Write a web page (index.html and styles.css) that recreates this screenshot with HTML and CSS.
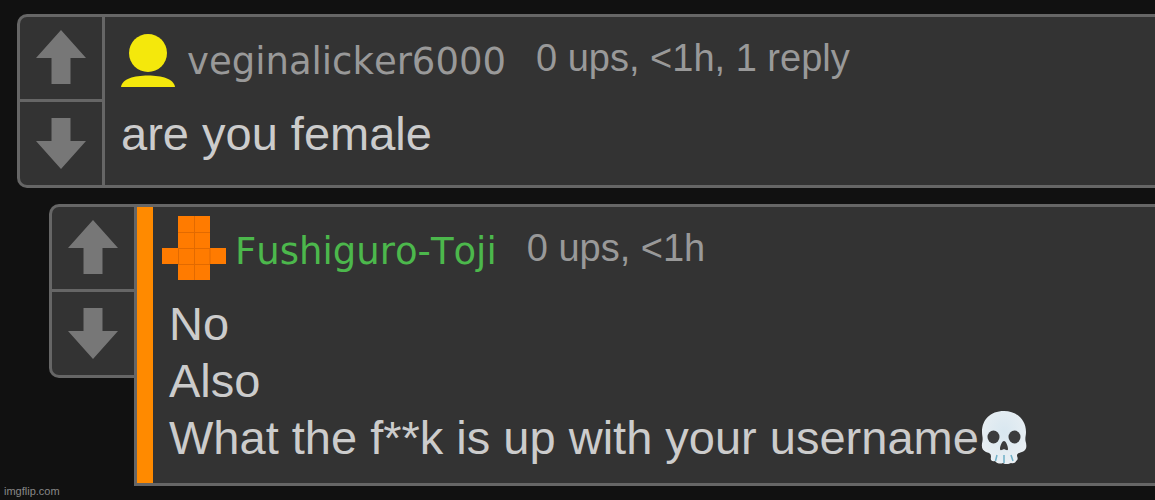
FILE: index.html
```
<!DOCTYPE html>
<html lang="en">
<head>
    <meta charset="UTF-8">
    <meta name="viewport" content="width=device-width, initial-scale=1.0">
    <title>Comments</title>
    <link rel="stylesheet" href="styles.css">
</head>
<body>
    <main class="comments">
        <article class="comment">
            <div class="votes">
                <button class="vote" type="button" aria-label="Upvote">
                    <svg class="arrow" viewBox="0 0 50 56"><path d="M25 0L50 28H34.500V54H15.500V28H0Z"/></svg>
                </button>
                <button class="vote" type="button" aria-label="Downvote">
                    <svg class="arrow" viewBox="0 0 50 56"><path d="M15.500 2H34.500V25H50L25 53L0 25H15.500Z"/></svg>
                </button>
            </div>
            <div class="content">
                <header class="meta">
                    <svg class="icon" viewBox="0 0 64 64" fill="#f4e80c">
                        <circle cx="34" cy="27" r="19"/>
                        <path d="M7 61C8 53 20 49.500 34 49.500S60 53 61 61Z"/>
                    </svg>
                    <a class="user" href="#">veginalicker6000</a>
                    <span class="stats">0 ups, &lt;1h, 1 reply</span>
                </header>
                <p class="text">are you female</p>
            </div>
        </article>

        <article class="comment reply">
            <div class="votes">
                <button class="vote" type="button" aria-label="Upvote">
                    <svg class="arrow" viewBox="0 0 50 56"><path d="M25 0L50 28H34.500V54H15.500V28H0Z"/></svg>
                </button>
                <button class="vote" type="button" aria-label="Downvote">
                    <svg class="arrow" viewBox="0 0 50 56"><path d="M15.500 2H34.500V25H50L25 53L0 25H15.500Z"/></svg>
                </button>
            </div>
            <div class="content highlight">
                <header class="meta">
                    <svg class="icon" viewBox="0 0 64 64">
                        <path fill="#ff7b00" d="M16 0H48V32H64V48H48V64H16V48H0V32H16Z"/>
                        <path fill="none" stroke="#e26a00" d="M32.500 0V64M16 16.500H48M16 32.500H48M16 48.500H48M16.500 32V48M48 32V48"/>
                    </svg>
                    <a class="user green" href="#">Fushiguro-Toji</a>
                    <span class="stats">0 ups, &lt;1h</span>
                </header>
                <p class="text">No<br>Also<br>What the f**k is up with your username<svg class="skull" viewBox="0 0 54 54" role="img" aria-label="skull">
                    <defs>
                        <radialGradient id="bone" cx="50%" cy="40%" r="60%">
                            <stop offset="0" stop-color="#d8e7f0"/>
                            <stop offset="1" stop-color="#e9eff3"/>
                        </radialGradient>
                    </defs>
                    <path fill="url(#bone)" d="M27 1C13 1 5 10 5 22C5 26 6 27 5.500 31C4 37 5 40 9 42C13 43 14 44 14 47C13 50 15 52 18 51C20 54 24 54 26 53C29 55 32 54 34 53C37 54 39 52 39 51C41 50 41 48 40 46C40 43 42 43 45 42C50 40 50 36 48.500 31C48 27 49 26 49 22C49 10 40 1 27 1Z"/>
                    <ellipse cx="16.500" cy="27" rx="6" ry="6.500" fill="#3b3c3d"/>
                    <ellipse cx="37.500" cy="27" rx="6" ry="6.500" fill="#3b3c3d"/>
                    <path fill="#3b3c3d" d="M27 31C25 31 23 36 23 39C23 41 25 40 27 39C29 40 31 41 31 39C31 36 29 31 27 31Z"/>
                    <path fill="none" stroke="#6fb0c7" stroke-width="1.500" d="M20 45L18.500 51M27 45V53M34 45L36 51"/>
                </svg></p>
            </div>
        </article>
    </main>
    <footer class="watermark">imgflip.com</footer>
</body>
</html>
```
FILE: styles.css
```
body {
    margin: 0;
    background: #111;
    font-family: "Liberation Sans", Arial, sans-serif;
    font-kerning: none;
    color: #ccc;
}
.comments {
    display: flex;
    flex-direction: column;
    gap: 16px;
    padding: 14px 0 14px 17px;
}
.comment {
    display: flex;
}
.reply {
    margin-left: 32px;
}
.votes {
    display: flex;
    flex-direction: column;
    align-self: flex-start;
    flex: none;
    box-sizing: border-box;
    width: 85px;
    border: 3px solid #666;
    border-right: none;
    border-radius: 10px 0 0 10px;
    background: #333;
}
.vote {
    display: flex;
    justify-content: center;
    align-items: center;
    height: 82px;
    padding: 0;
    border: none;
    background: none;
    cursor: pointer;
}
.vote + .vote {
    height: 86px;
    border-top: 3px solid #666;
}
.arrow {
    width: 50px;
    height: 56px;
    fill: #777;
}
.content {
    flex: 1;
    min-width: 0;
    border: 3px solid #666;
    border-right: none;
    background: #333;
    padding-bottom: 17px;
}
.highlight {
    background: linear-gradient(to right, #ff8a00 16px, #333 16px);
    padding-left: 16px;
}
.meta {
    display: flex;
    align-items: center;
    padding: 9px 9px 15px;
}
.icon {
    flex: none;
    width: 64px;
    height: 64px;
    margin-right: 9px;
}
.user {
    padding-top: 7px;
    margin-right: 30px;
    font-family: "DejaVu Sans", Verdana, sans-serif;
    font-size: 37px;
    line-height: 44px;
    color: #999;
    text-decoration: none;
}
.green {
    color: #4cb84c;
}
.stats {
    font-size: 38px;
    line-height: 44px;
    color: #999;
}
.text {
    margin: 0;
    padding: 0 16px;
    font-size: 47px;
    line-height: 57px;
}
.skull {
    width: 54px;
    height: 54px;
    margin-left: -2px;
    vertical-align: -10px;
}
.watermark {
    position: absolute;
    left: 4px;
    bottom: 2px;
    font-size: 11px;
    line-height: 13px;
    color: #888;
}
```
